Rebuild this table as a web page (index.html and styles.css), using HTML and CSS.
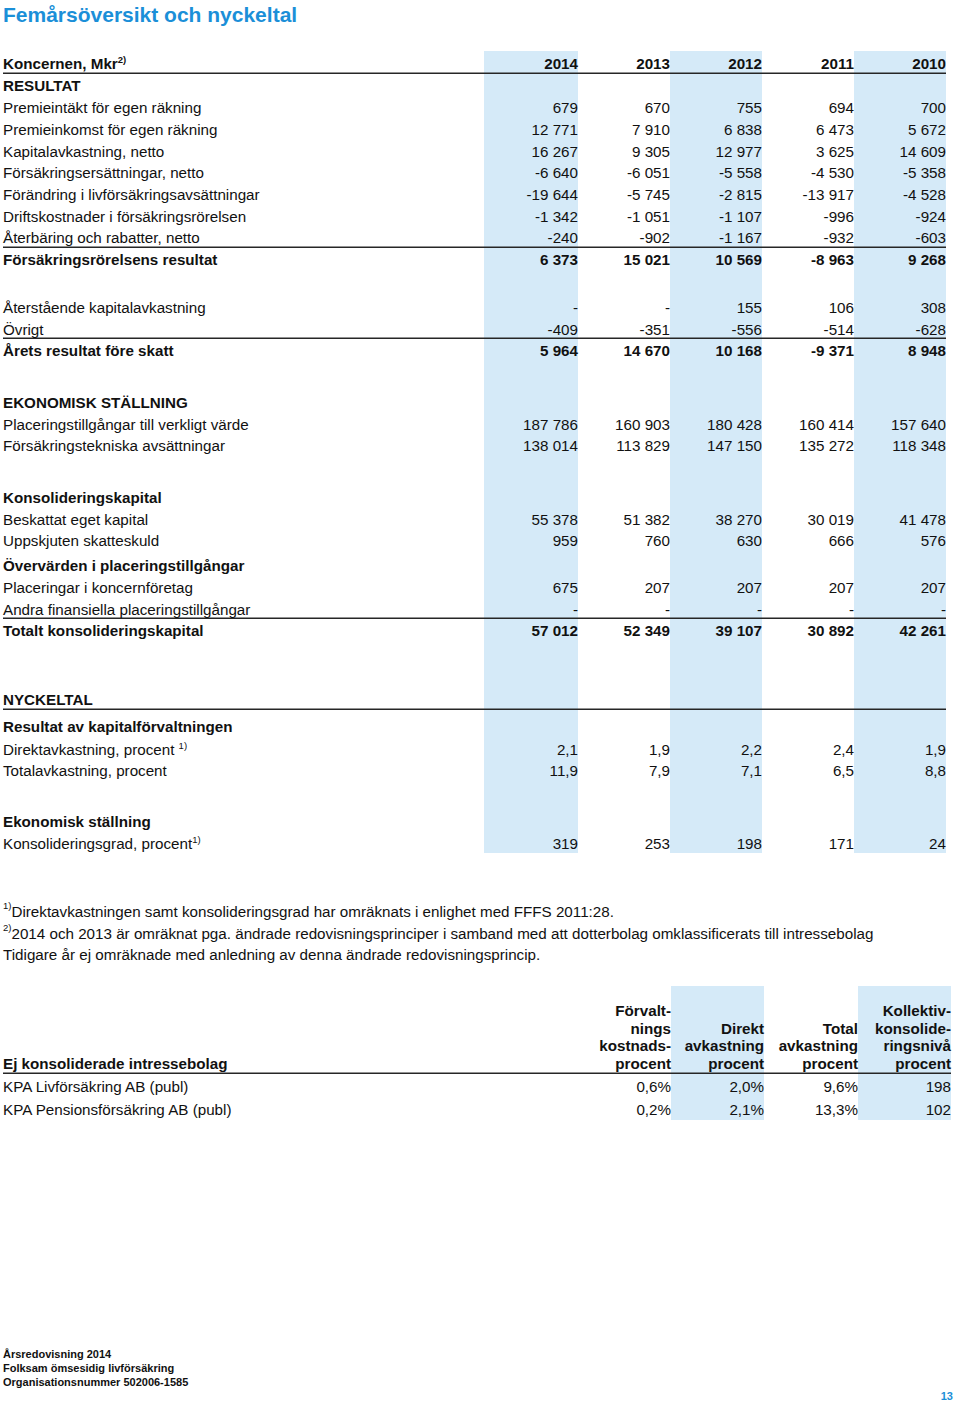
FILE: index.html
```html
<!DOCTYPE html>
<html lang="sv">
<head>
<meta charset="utf-8">
<title>Femårsöversikt och nyckeltal</title>
<link rel="stylesheet" href="styles.css">
</head>
<body>
<div class="page">
  <h1 class="title">Femårsöversikt och nyckeltal</h1>

  <table class="t1">
    <colgroup>
      <col class="c-lab">
      <col class="c-first b">
      <col class="c-num">
      <col class="c-num b">
      <col class="c-num">
      <col class="c-num b">
    </colgroup>
    <tbody>
      <tr class="hd ln bold"><td>Koncernen, Mkr<sup>2)</sup></td><td>2014</td><td>2013</td><td>2012</td><td>2011</td><td>2010</td></tr>
      <tr class="res bold"><td>RESULTAT</td><td></td><td></td><td></td><td></td><td></td></tr>
      <tr class="r"><td>Premieintäkt för egen räkning</td><td>679</td><td>670</td><td>755</td><td>694</td><td>700</td></tr>
      <tr class="r"><td>Premieinkomst för egen räkning</td><td>12 771</td><td>7 910</td><td>6 838</td><td>6 473</td><td>5 672</td></tr>
      <tr class="r"><td>Kapitalavkastning, netto</td><td>16 267</td><td>9 305</td><td>12 977</td><td>3 625</td><td>14 609</td></tr>
      <tr class="r"><td>Försäkringsersättningar, netto</td><td>-6 640</td><td>-6 051</td><td>-5 558</td><td>-4 530</td><td>-5 358</td></tr>
      <tr class="r"><td>Förändring i livförsäkringsavsättningar</td><td>-19 644</td><td>-5 745</td><td>-2 815</td><td>-13 917</td><td>-4 528</td></tr>
      <tr class="r"><td>Driftskostnader i försäkringsrörelsen</td><td>-1 342</td><td>-1 051</td><td>-1 107</td><td>-996</td><td>-924</td></tr>
      <tr class="r ln"><td>Återbäring och rabatter, netto</td><td>-240</td><td>-902</td><td>-1 167</td><td>-932</td><td>-603</td></tr>
      <tr class="r bold"><td>Försäkringsrörelsens resultat</td><td>6 373</td><td>15 021</td><td>10 569</td><td>-8 963</td><td>9 268</td></tr>
      <tr class="sp sp26"><td></td><td></td><td></td><td></td><td></td><td></td></tr>
      <tr class="r"><td>Återstående kapitalavkastning</td><td>-</td><td>-</td><td>155</td><td>106</td><td>308</td></tr>
      <tr class="r ln"><td>Övrigt</td><td>-409</td><td>-351</td><td>-556</td><td>-514</td><td>-628</td></tr>
      <tr class="r bold"><td>Årets resultat före skatt</td><td>5 964</td><td>14 670</td><td>10 168</td><td>-9 371</td><td>8 948</td></tr>
      <tr class="sp sp30"><td></td><td></td><td></td><td></td><td></td><td></td></tr>
      <tr class="r bold"><td>EKONOMISK STÄLLNING</td><td></td><td></td><td></td><td></td><td></td></tr>
      <tr class="r"><td>Placeringstillgångar till verkligt värde</td><td>187 786</td><td>160 903</td><td>180 428</td><td>160 414</td><td>157 640</td></tr>
      <tr class="r"><td>Försäkringstekniska avsättningar</td><td>138 014</td><td>113 829</td><td>147 150</td><td>135 272</td><td>118 348</td></tr>
      <tr class="sp sp30"><td></td><td></td><td></td><td></td><td></td><td></td></tr>
      <tr class="r bold"><td>Konsolideringskapital</td><td></td><td></td><td></td><td></td><td></td></tr>
      <tr class="r"><td>Beskattat eget kapital</td><td>55 378</td><td>51 382</td><td>38 270</td><td>30 019</td><td>41 478</td></tr>
      <tr class="r"><td>Uppskjuten skatteskuld</td><td>959</td><td>760</td><td>630</td><td>666</td><td>576</td></tr>
      <tr class="r tall bold"><td>Övervärden i placeringstillgångar</td><td></td><td></td><td></td><td></td><td></td></tr>
      <tr class="r"><td>Placeringar i koncernföretag</td><td>675</td><td>207</td><td>207</td><td>207</td><td>207</td></tr>
      <tr class="r ln"><td>Andra finansiella placeringstillgångar</td><td>-</td><td>-</td><td>-</td><td>-</td><td>-</td></tr>
      <tr class="r bold"><td>Totalt konsolideringskapital</td><td>57 012</td><td>52 349</td><td>39 107</td><td>30 892</td><td>42 261</td></tr>
      <tr class="sp sp47"><td></td><td></td><td></td><td></td><td></td><td></td></tr>
      <tr class="r nyck ln bold"><td>NYCKELTAL</td><td></td><td></td><td></td><td></td><td></td></tr>
      <tr class="r taller bold"><td>Resultat av kapitalförvaltningen</td><td></td><td></td><td></td><td></td><td></td></tr>
      <tr class="r"><td>Direktavkastning, procent <sup>1)</sup></td><td>2,1</td><td>1,9</td><td>2,2</td><td>2,4</td><td>1,9</td></tr>
      <tr class="r"><td>Totalavkastning, procent</td><td>11,9</td><td>7,9</td><td>7,1</td><td>6,5</td><td>8,8</td></tr>
      <tr class="sp sp29"><td></td><td></td><td></td><td></td><td></td><td></td></tr>
      <tr class="r bold"><td>Ekonomisk ställning</td><td></td><td></td><td></td><td></td><td></td></tr>
      <tr class="r"><td>Konsolideringsgrad, procent<sup>1)</sup></td><td>319</td><td>253</td><td>198</td><td>171</td><td>24</td></tr>
    </tbody>
  </table>

  <div class="notes">
    <p><sup>1)</sup>Direktavkastningen samt konsolideringsgrad har omräknats i enlighet med FFFS 2011:28.</p>
    <p><sup>2)</sup>2014 och 2013 är omräknat pga. ändrade redovisningsprinciper i samband med att dotterbolag omklassificerats till intressebolag</p>
    <p>Tidigare år ej omräknade med anledning av denna ändrade redovisningsprincip.</p>
  </div>

  <table class="t2">
    <colgroup>
      <col class="c2-lab">
      <col class="c2-num">
      <col class="c2-num b">
      <col class="c2-wide">
      <col class="c2-num b">
    </colgroup>
    <tbody>
      <tr class="h2 ln bold">
        <td>Ej konsoliderade intressebolag</td>
        <td>Förvalt-<br>nings<br>kostnads-<br>procent</td>
        <td>Direkt<br>avkastning<br>procent</td>
        <td>Total<br>avkastning<br>procent</td>
        <td>Kollektiv-<br>konsolide-<br>ringsnivå<br>procent</td>
      </tr>
      <tr class="r2"><td>KPA Livförsäkring AB (publ)</td><td>0,6%</td><td>2,0%</td><td>9,6%</td><td>198</td></tr>
      <tr class="r2"><td>KPA Pensionsförsäkring AB (publ)</td><td>0,2%</td><td>2,1%</td><td>13,3%</td><td>102</td></tr>
    </tbody>
  </table>

  <footer class="footer">
    <div>Årsredovisning 2014</div>
    <div>Folksam ömsesidig livförsäkring</div>
    <div>Organisationsnummer 502006-1585</div>
    <div class="pagenum">13</div>
  </footer>
</div>
</body>
</html>
```

FILE: styles.css
```css
html, body {
  margin: 0;
  padding: 0;
  background: #ffffff;
}

body {
  font-family: "Liberation Sans", Arial, Helvetica, sans-serif;
  color: #111111;
}

.page {
  width: 960px;
  box-sizing: border-box;
  padding-left: 3px;
}

.title {
  margin: 0;
  font-size: 21px;
  font-weight: bold;
  line-height: 30px;
  height: 30px;
  color: #1b8fd8;
}

table {
  border-collapse: separate;
  border-spacing: 0;
  table-layout: fixed;
  font-size: 15.2px;
}

td {
  padding: 0;
  line-height: 18px;
  white-space: nowrap;
  vertical-align: middle;
  text-align: right;
  box-sizing: border-box;
}

td:first-child {
  text-align: left;
}

col.b {
  background: #d5eaf8;
}

.bold td {
  font-weight: bold;
}

.ln td {
  box-shadow: inset 0 -1.5px 0 #262626;
}

sup {
  font-size: 9.5px;
  line-height: 10px;
  vertical-align: top;
}

/* table 1 */
.t1 {
  width: 943px;
  margin-top: 21px;
}

.c-lab { width: 481px; }
.c-first { width: 94px; }
.c-num { width: 92px; }

.hd td {
  height: 23px;
  vertical-align: bottom;
  padding-bottom: 1px;
}

.res td {
  height: 22px;
  padding-top: 2px;
}

.r td {
  height: 21.7px;
  padding-top: 3px;
}

.tall td {
  height: 25px;
  padding-top: 5px;
}

.nyck td {
  height: 22.5px;
  padding-top: 2px;
}

.taller td {
  height: 27.2px;
  padding-top: 6.5px;
}

.sp td {
  padding: 0;
}

.sp26 td { height: 26px; }
.sp29 td { height: 29px; }
.sp30 td { height: 30px; }
.sp47 td { height: 47px; }

/* footnotes */
.notes {
  margin-top: 48px;
  font-size: 15.2px;
  line-height: 21.5px;
}

.notes p {
  margin: 0;
  white-space: nowrap;
}

/* table 2 */
.t2 {
  width: 948px;
  margin-top: 20px;
}

.c2-lab { width: 575px; }
.c2-num { width: 93px; }
.c2-wide { width: 94px; }

.h2 td {
  height: 88px;
  line-height: 17.7px;
  vertical-align: bottom;
  padding-bottom: 1px;
}

.r2 td {
  height: 23px;
  vertical-align: bottom;
  padding-bottom: 1px;
}

/* footer */
.footer {
  margin-top: 227px;
  font-size: 11px;
  font-weight: bold;
  line-height: 14px;
}

.pagenum {
  text-align: right;
  padding-right: 7px;
  color: #1b8fd8;
}
```
